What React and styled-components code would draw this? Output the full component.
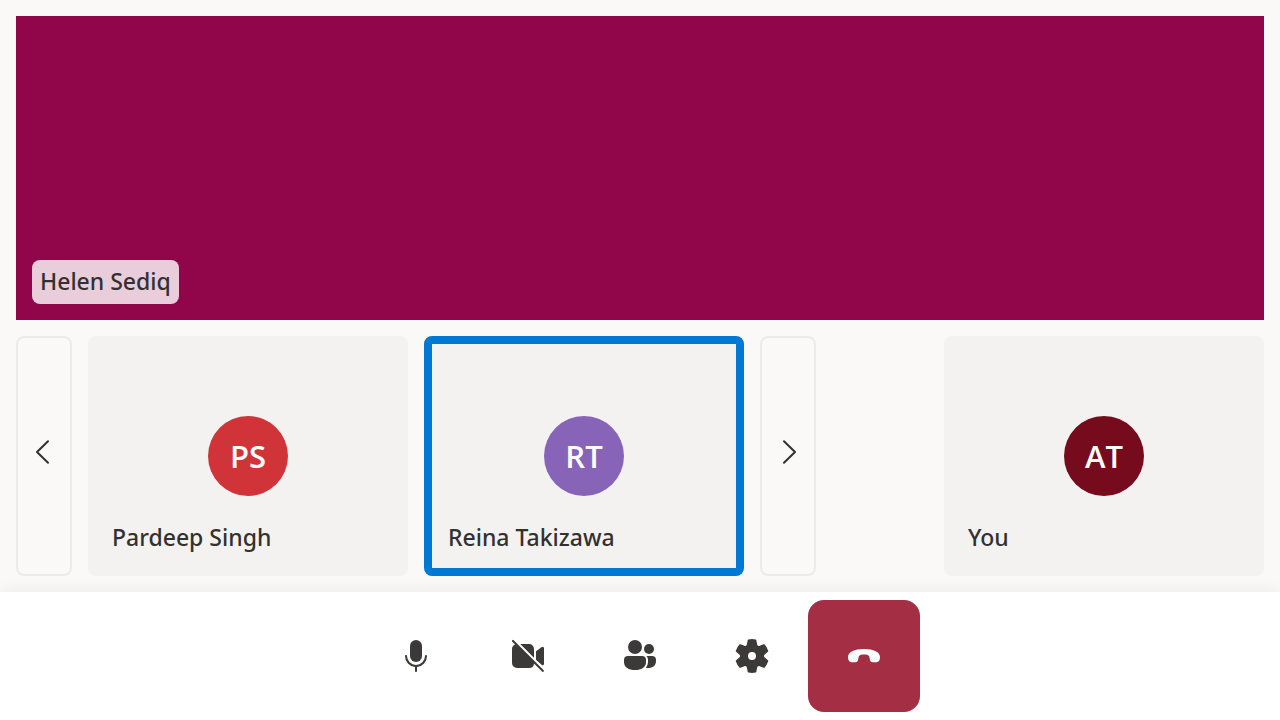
import React from "react";
import styled, { createGlobalStyle } from "styled-components";

const GlobalStyle = createGlobalStyle`
  *, *::before, *::after {
    box-sizing: border-box;
  }
  body {
    margin: 0;
    background: #faf9f8;
    color: #323130;
    font-family: "Noto Sans", "Open Sans", sans-serif;
    font-size: 23px;
    font-weight: 500;
  }
  button {
    font: inherit;
    color: inherit;
    cursor: pointer;
  }
`;

const Page = styled.div`
  display: flex;
  flex-direction: column;
  min-height: 100vh;
`;

const Stage = styled.main`
  flex: 1;
  display: flex;
  flex-direction: column;
  gap: 16px;
  padding: 16px;
`;

const Speaker = styled.section`
  flex: 1;
  display: flex;
  align-items: flex-end;
  min-height: 160px;
  padding: 16px;
  background: #91064a;
`;

const Name = styled.span`
  grid-row: 3;
  align-self: end;
  justify-self: start;
  padding: 0 8px 2px;
  border-radius: 8px;
  line-height: 42px;
  white-space: nowrap;
  background: ${(p) => (p.$filled ? "rgba(255, 255, 255, 0.8)" : "transparent")};
`;

const Strip = styled.div`
  display: flex;
  justify-content: space-between;
  gap: 16px;
`;

const Carousel = styled.div`
  display: flex;
  gap: 16px;
`;

const PageButton = styled.button`
  display: flex;
  align-items: center;
  justify-content: center;
  width: 56px;
  padding: 0 0 8px;
  border: 2px solid #edebe9;
  border-radius: 8px;
  background: transparent;
`;

const Tile = styled.article`
  display: grid;
  grid-template-rows: 1fr 80px 1fr;
  width: 320px;
  height: 240px;
  padding: 8px;
  border: 8px solid ${(p) => (p.$speaking ? "#0078d4" : "#f3f2f1")};
  border-radius: 8px;
  background: #f3f2f1;
`;

const Avatar = styled.div`
  grid-row: 2;
  justify-self: center;
  width: 80px;
  border-radius: 50%;
  background: ${(p) => p.$color};
  color: #ffffff;
  font-family: "Open Sans", "Noto Sans", sans-serif;
  font-size: 31px;
  font-weight: 600;
  line-height: 80px;
  text-align: center;
`;

const ControlBar = styled.footer`
  display: flex;
  justify-content: center;
  padding: 8px;
  background: #ffffff;
  box-shadow: 0 0 16px rgba(0, 0, 0, 0.07);
`;

const ControlButton = styled.button`
  display: flex;
  align-items: center;
  justify-content: center;
  width: 112px;
  height: 112px;
  padding: 0;
  border: 0;
  border-radius: 16px;
  background: ${(p) => (p.$danger ? "#a42e43" : "transparent")};
  color: ${(p) => (p.$danger ? "#ffffff" : "#3b3a39")};
`;

const Glyph = styled.svg`
  display: block;
  width: 40px;
  height: 40px;
  fill: currentColor;
`;

const Chevron = styled(Glyph)`
  fill: none;
  stroke: currentColor;
  stroke-width: 1;
  stroke-linecap: round;
  stroke-linejoin: round;
`;

function Icon({ children }) {
  return (
    <Glyph viewBox="0 0 20 20" aria-hidden="true">
      {children}
    </Glyph>
  );
}

function Participant({ initials, name, color, speaking }) {
  return (
    <Tile $speaking={speaking}>
      <Avatar $color={color} aria-hidden="true">
        {initials}
      </Avatar>
      <Name>{name}</Name>
    </Tile>
  );
}

export default function App() {
  return (
    <Page>
      <GlobalStyle />
      <Stage>
        <Speaker>
          <Name $filled>Helen Sediq</Name>
        </Speaker>
        <Strip>
          <Carousel>
            <PageButton type="button" aria-label="Previous participants">
              <Chevron viewBox="0 0 20 20" aria-hidden="true">
                <path d="M12 4.6 6.5 10l5.5 5.4" />
              </Chevron>
            </PageButton>
            <Participant initials="PS" name="Pardeep Singh" color="#d13438" />
            <Participant initials="RT" name="Reina Takizawa" color="#8764b8" speaking />
            <PageButton type="button" aria-label="Next participants">
              <Chevron viewBox="0 0 20 20" aria-hidden="true">
                <path d="M8 4.6 13.5 10 8 15.4" />
              </Chevron>
            </PageButton>
          </Carousel>
          <Participant initials="AT" name="You" color="#750b1c" />
        </Strip>
      </Stage>
      <ControlBar>
        <ControlButton type="button" aria-label="Mute">
          <Icon>
            <path d="M10 13a3 3 0 0 0 3-3V5a3 3 0 0 0-6 0v5a3 3 0 0 0 3 3Z" />
            <path d="M5 9.5c.28 0 .5.22.5.5a4.5 4.5 0 1 0 9 0 .5.5 0 0 1 1 0 5.5 5.5 0 0 1-5 5.48v2.02a.5.5 0 0 1-1 0v-2.02A5.5 5.5 0 0 1 4.5 10c0-.28.22-.5.5-.5Z" />
          </Icon>
        </ControlButton>
        <ControlButton type="button" aria-label="Turn camera on">
          <Icon>
            <path d="M2.85 2.15a.5.5 0 1 0-.7.7L3.53 4.23A2.5 2.5 0 0 0 2 6.5v7A2.5 2.5 0 0 0 4.5 16h6a2.5 2.5 0 0 0 2.49-2.3l4.16 4.15a.5.5 0 0 0 .7-.7Z" />
            <path d="M6.12 4h4.38A2.5 2.5 0 0 1 13 6.5v4.38Z" />
            <path d="M14 11.88V7.6l2.9-2.1a.7.7 0 0 1 1.1.6v7.8c0 .6-.5.85-.95.75Z" />
          </Icon>
        </ControlButton>
        <ControlButton type="button" aria-label="People">
          <Icon>
            <circle cx="7.5" cy="5.5" r="3.5" />
            <circle cx="14.5" cy="6.5" r="2.5" />
            <path d="M4 10h7a2 2 0 0 1 2 2v1c0 2.7-2.4 4-5.5 4S2 15.7 2 13v-1a2 2 0 0 1 2-2Z" />
            <path d="M13.2 10H16a2 2 0 0 1 2 2v.5c0 2.3-1.6 3.5-4 3.5-.4 0-.8 0-1.1-.1.7-.8 1.1-1.8 1.1-3.1V12c0-.8-.3-1.5-.8-2Z" />
          </Icon>
        </ControlButton>
        <ControlButton type="button" aria-label="Settings">
          <Icon>
            <path d="M1.91 7.38A8.5 8.5 0 0 1 3.7 4.3a.5.5 0 0 1 .54-.13l1.92.68a1 1 0 0 0 1.32-.76l.36-2a.5.5 0 0 1 .4-.4 8.53 8.53 0 0 1 3.55 0c.2.04.35.2.38.4l.37 2a1 1 0 0 0 1.32.76l1.92-.68a.5.5 0 0 1 .54.13 8.5 8.5 0 0 1 1.78 3.08c.06.2 0 .4-.15.54l-1.56 1.32a1 1 0 0 0 0 1.52l1.56 1.32a.5.5 0 0 1 .15.54 8.5 8.5 0 0 1-1.78 3.08.5.5 0 0 1-.54.13l-1.92-.68a1 1 0 0 0-1.32.76l-.37 2a.5.5 0 0 1-.38.4 8.53 8.53 0 0 1-3.56 0 .5.5 0 0 1-.39-.4l-.36-2a1 1 0 0 0-1.32-.76l-1.92.68a.5.5 0 0 1-.54-.13 8.5 8.5 0 0 1-1.78-3.08.5.5 0 0 1 .15-.54l1.56-1.32a1 1 0 0 0 0-1.52L2.06 7.92a.5.5 0 0 1-.15-.54ZM8 10a2 2 0 1 0 4 0 2 2 0 0 0-4 0Z" />
          </Icon>
        </ControlButton>
        <ControlButton type="button" aria-label="Leave call" $danger>
          <Icon>
            <path d="M10 6.5c4.8 0 8 1.5 8 4 0 1.7-.6 2.5-1.7 2.6h-2c-.8 0-1.2-.4-1.3-1.1l-.4-1.9c-.5-.7-1.4-.9-2.6-.9s-2.1.2-2.6.9L7 12c-.1.7-.5 1.1-1.3 1.1h-2C2.6 13 2 12.2 2 10.500c0-2.500 3.200-4 8-4Z" />
          </Icon>
        </ControlButton>
      </ControlBar>
    </Page>
  );
}
